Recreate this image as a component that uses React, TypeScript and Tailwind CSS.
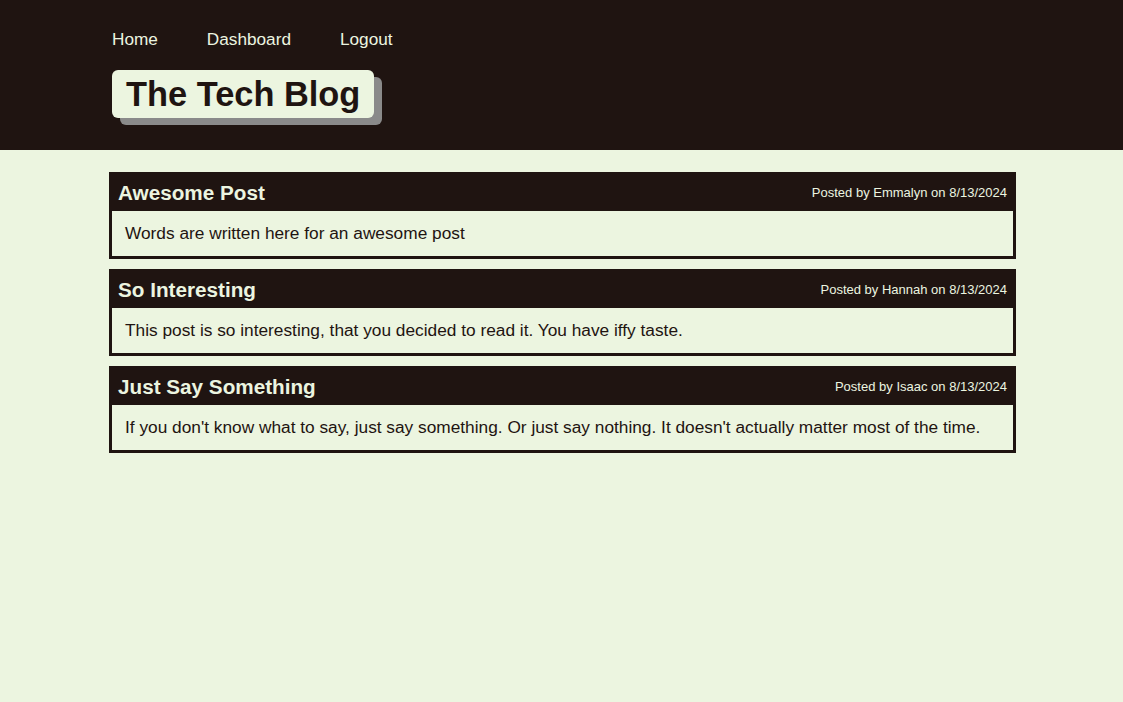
import React from "react";

const posts = [
  { title: "Awesome Post", author: "Emmalyn", date: "8/13/2024", body: "Words are written here for an awesome post" },
  { title: "So Interesting", author: "Hannah", date: "8/13/2024", body: "This post is so interesting, that you decided to read it. You have iffy taste." },
  { title: "Just Say Something", author: "Isaac", date: "8/13/2024", body: "If you don't know what to say, just say something. Or just say nothing. It doesn't actually matter most of the time." },
];

export default function App() {
  return (
    <div className="min-h-[702px] bg-[#ecf5e0] text-[#1f1411]" style={{ fontFamily: '"Liberation Sans", Arial, sans-serif' }}>
      <header className="h-[150px] bg-[#1f1411] pl-[112px] pt-[29px]">
        <nav className="flex text-[17.2px] leading-[20px] text-[#ecf5e0]">
          <a className="mr-[49px]">Home</a>
          <a className="mr-[49px]">Dashboard</a>
          <a>Logout</a>
        </nav>
        <div className="mt-[21px] inline-block rounded-[6px] bg-[#ecf5e0] px-[14px] pt-[3px] pb-[3px] shadow-[8px_7px_0_#8a8a8a]">
          <h1 className="text-[34.4px] font-bold leading-[42px] text-[#1f1411]">The Tech Blog</h1>
        </div>
      </header>
      <main className="ml-[109px] w-[907px] pt-[22px]">
        {posts.map((p) => (
          <section key={p.title} className="mb-[10.5px] border-[3px] border-[#1f1411]">
            <div className="flex items-center justify-between bg-[#1f1411] pl-[6px] pr-[6px] h-[36px] text-[#ecf5e0]">
              <h2 className="text-[20.7px] font-bold leading-[24px]">{p.title}</h2>
              <span className="text-[13px] leading-[14px]">Posted by {p.author} on {p.date}</span>
            </div>
            <p className="px-[13px] pt-[12px] pb-[12.5px] text-[17.3px] leading-[20px]">{p.body}</p>
          </section>
        ))}
      </main>
    </div>
  );
}
